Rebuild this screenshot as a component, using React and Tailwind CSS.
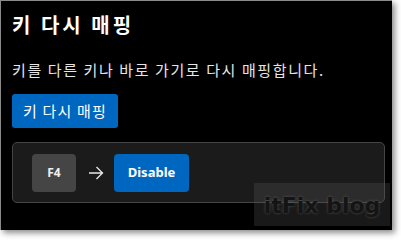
import React from 'react';

const ArrowRight = () => (
  <svg width="16" height="14" viewBox="0 0 16 14" fill="none" stroke="#e8e8e8" strokeWidth="1.3">
    <path d="M1 7h14M8.5 1l6 6-6 6" />
  </svg>
);

const App = () => {
  return (
    <div className="relative w-[401px] h-[241px] bg-white overflow-hidden font-['Noto_Sans_CJK_KR',sans-serif]">
      {/* Panel */}
      <div className="w-[392px] h-[230px] bg-black border-t border-l border-[#8a8a8a] shadow-[3px_3px_6px_rgba(0,0,0,0.45)] pl-[11px] pr-[7px] pt-[9px]">
        <h1 className="text-[20px] leading-[30px] font-bold text-white tracking-[3px]">키 다시 매핑</h1>
        <p className="mt-[19px] text-[15px] leading-[22px] text-[#e6e6e6] tracking-[1.6px]">키를 다른 키나 바로 가기로 다시 매핑합니다.</p>
        <button className="mt-[13px] h-[34px] w-[106px] rounded-[3px] bg-[#0067c0] text-[15px] text-white tracking-[1.2px]">키 다시 매핑</button>

        {/* Mapping card */}
        <div className="mt-[14px] h-[61px] rounded-[5px] border border-[#454545] bg-[#1b1b1b] flex items-center pl-[19px]">
          <div className="w-[44px] h-[38px] rounded-[4px] bg-[#454545] flex items-center justify-center text-[12px] font-bold text-[#f0f0f0] font-['Noto_Sans',sans-serif]">F4</div>
          <div className="ml-[12px] mr-[10px] flex"><ArrowRight /></div>
          <div className="w-[75px] h-[38px] rounded-[4px] bg-[#0067c0] flex items-center justify-center text-[13px] font-bold text-white font-['Noto_Sans',sans-serif]">Disable</div>
        </div>
      </div>

      {/* Watermark */}
      <div className="absolute left-[254px] top-[183px] w-[136px] h-[43px] bg-[rgba(90,90,90,0.28)] flex items-center justify-center pt-[2px]">
        <span className="text-[22px] font-bold text-[#141414] font-['DejaVu_Sans',sans-serif] [text-shadow:0_0_3px_rgba(120,120,120,0.6)]">itFix blog</span>
      </div>
    </div>
  );
};

export default App;
